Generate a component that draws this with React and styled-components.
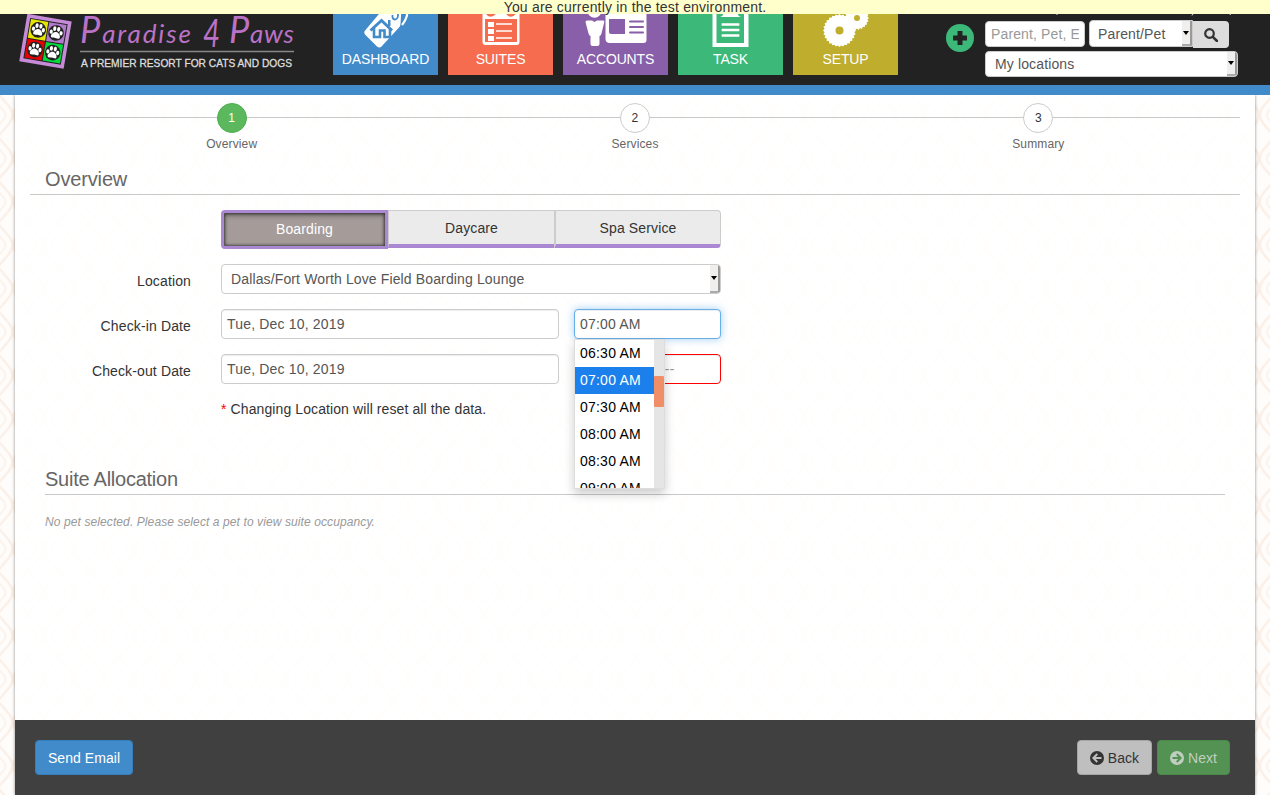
import React from 'react';
import styled, { createGlobalStyle, css } from 'styled-components';

const Global = createGlobalStyle`
  *{box-sizing:border-box}
  html,body{margin:0;background:#fff;overflow:hidden}
  body{font-family:"Liberation Sans",Arial,sans-serif;font-size:14px;line-height:20px;color:#333;letter-spacing:.13px}
  input,button{font:inherit;letter-spacing:inherit}
`;
const Page = styled.div`
  position:relative;width:1270px;height:795px;display:flex;flex-direction:column;overflow:hidden;background:#fffdfb;
`;
const Pattern = styled.svg`position:absolute;inset:0;width:100%;height:100%;`;
const Notice = styled.div`
  height:14px;flex:none;background:#ffffcc;text-align:center;line-height:14px;color:#333;z-index:2;position:relative;letter-spacing:.19px;
`;
const Header = styled.header`
  height:81px;flex:none;background:#222;border-bottom:10px solid #428bca;display:flex;align-items:flex-start;position:relative;z-index:1;
`;
const Logo = styled.svg`width:333px;height:71px;flex:none;display:block;letter-spacing:0;overflow:visible;`;
const Nav = styled.nav`display:flex;gap:10px;`;
const NavTile = styled.a`
  width:105px;height:61px;background:${p => p.$color};color:#fff;display:flex;flex-direction:column;align-items:center;
  svg{display:block;width:60px;height:35px;flex:none;overflow:visible}
`;
const NavLabel = styled.span`line-height:20px;letter-spacing:-.15px;`;
const Tools = styled.div`display:flex;margin-left:48px;`;
const AddButton = styled.button`
  width:28px;height:28px;padding:0;border:0;border-radius:50%;background:#3cb878;margin:10px 11px 0 0;
  svg{display:block}
`;
const ToolStack = styled.div`display:flex;flex-direction:column;width:253px;`;
const AccountEdge = styled.svg`display:block;width:253px;height:6px;flex:none;`;
const ToolRow = styled.div`display:flex;height:28px;margin-bottom:3px;`;
const Search = styled.input`
  width:100px;height:26px;margin:1px 4px 0 0;border:1px solid #ccc;border-radius:4px;padding:0 5px;color:#555;background:#fff;
  &::placeholder{color:#999;opacity:1}
`;
const Select = styled.div`
  display:flex;justify-content:space-between;align-items:stretch;background:#fff;color:#555;border:1px solid #ccc;
  border-radius:${p => p.$joined ? '4px 0 0 4px' : '4px'};width:${p => p.$w}px;height:${p => p.$h}px;
  padding-left:${p => p.$pad || 9}px;line-height:${p => p.$lh || p.$h - 2}px;overflow:hidden;
`;
const Arrow = styled.i`
  width:10px;background:#f0efee;border-right:2px solid #999;border-bottom:2px solid #aaa;display:flex;align-items:center;justify-content:center;
  &::after{content:"";width:0;flex:none;border:3px solid transparent;border-top:4px solid #000;border-bottom:0}
`;
const SearchButton = styled.button`
  width:36px;height:27px;margin-top:1px;border:0;border-radius:0 4px 4px 0;background:#ddd;padding:0;display:flex;align-items:center;justify-content:center;
`;
const Panel = styled.main`
  position:relative;width:1240px;margin:0 15px;flex:1;background:rgba(255,255,255,.9);box-shadow:0 0 3px rgba(0,0,0,.45);
  display:flex;flex-direction:column;min-height:0;
`;
const Steps = styled.ol`
  list-style:none;margin:0 15px;padding:8px 0 0;display:flex;height:67px;
  background:linear-gradient(#c8c8c8,#c8c8c8) 0 22px/100% 1px no-repeat;
`;
const Step = styled.li`flex:1;display:flex;flex-direction:column;align-items:center;font-size:12px;color:#666;`;
const StepDot = styled.span`
  width:30px;height:30px;border-radius:50%;border:1px solid ${p => p.$on ? '#4cae4c' : '#ccc'};
  background:${p => p.$on ? '#5cb85c' : '#fff'};color:${p => p.$on ? '#fff' : '#333'};line-height:28px;text-align:center;margin-bottom:1px;
`;
const Heading = styled.h2`
  margin:${p => p.$inset ? '0 30px' : '0 15px'};padding:${p => p.$inset ? '0' : '0 0 0 15px'};height:33px;line-height:34px;
  font-size:20px;font-weight:400;color:#666;border-bottom:1px solid #c8c8c8;letter-spacing:${p => p.$inset ? '-.25px' : '-.15px'};
`;
const Form = styled.form`display:flex;flex-direction:column;padding:15px 0 0 15px;height:267px;`;
const Row = styled.div`display:flex;height:30px;margin-bottom:15px;`;
const Label = styled.label`width:161px;margin-right:30px;text-align:right;line-height:34px;`;
const Segments = styled.div`display:grid;grid-template-columns:167px 166px 167px;width:500px;height:39px;margin:0 0 15px 191px;align-items:start;`;
const Segment = styled.button`
  height:38px;padding:0;background:#ebebeb;color:#333;border:1px solid #ccc;border-left-width:${p => p.$last ? 2 : 1}px;
  border-right-width:${p => p.$last ? 1 : 0}px;border-bottom:4px solid #aa88d2;border-radius:${p => p.$last ? '0 4px 4px 0' : 0};
  ${p => p.$active && css`height:39px;padding-bottom:2px;background:#a59c9a;color:#fff;border:3px solid #aa88d2;border-radius:4px 0 0 4px;
    box-shadow:inset 0 3px 5px rgba(0,0,0,.3),inset 0 0 3px 1px rgba(0,0,0,.55);`}
`;
const Input = styled.input`
  width:${p => p.$w}px;height:30px;border:1px solid #ccc;border-radius:4px;background:#fff;color:#555;padding:0 5px;outline:0;
  box-shadow:inset 0 1px 1px rgba(0,0,0,.075);letter-spacing:.18px;
  ${p => p.$focus && css`border-color:#66afe9;box-shadow:inset 0 1px 1px rgba(0,0,0,.075),0 0 8px rgba(102,175,233,.6);`}
  ${p => p.$error && css`border-color:#f00;color:#999;`}
`;
const TimeField = styled.div`position:relative;margin-left:15px;`;
const Menu = styled.div`
  position:absolute;left:0;top:30px;width:91px;height:150px;z-index:3;display:flex;background:#fff;border:1px solid #ddd;
  box-shadow:0 5px 10px rgba(0,0,0,.2);overflow:hidden;
`;
const Options = styled.div`width:79px;flex:none;letter-spacing:.22px;`;
const Option = styled.div`
  height:27px;line-height:27px;padding-left:5px;white-space:nowrap;background:${p => p.$on ? '#1b7fec' : '#fff'};color:${p => p.$on ? '#fff' : '#000'};
`;
const Track = styled.div`flex:1;background:#e5e5e5;padding-top:36px;`;
const Thumb = styled.div`height:31px;width:10px;background:#ef8e67;border-radius:1px;`;
const Note = styled.p`margin:0 0 0 191px;line-height:20px;letter-spacing:.1px;b{color:red;font-weight:400}`;
const Empty = styled.p`margin:17px 30px 0;font-size:12px;font-style:italic;color:#999;flex:1;letter-spacing:.1px;`;
const Footer = styled.footer`
  height:75px;flex:none;background:#404040;padding:20px 25px 0 20px;display:flex;gap:5px;align-items:flex-start;
`;
const Button = styled.button`
  height:35px;width:${p => p.$w}px;padding:0;border-radius:4px;border:1px solid ${p => p.$border};background:${p => p.$bg};color:${p => p.$fg};
  display:flex;align-items:center;justify-content:center;gap:4px;letter-spacing:.05px;${p => p.$push && 'margin-left:auto;'}
`;

const Paw = () => (
  <>
    <circle r="7.8" fill="#222" />
    <path d="M0-1c2.4 0 5 3 4.500 5.200C4 6 2 5 0 5s-4 1-4.500-.8C-5 2-2.400-1 0-1z" fill="#fff" />
    <g fill="#fff"><ellipse cx="-5" cy="-.5" rx="1.600" ry="2.200" /><ellipse cx="-2" cy="-4" rx="1.600" ry="2.400" /><ellipse cx="2" cy="-4" rx="1.600" ry="2.400" /><ellipse cx="5" cy="-.5" rx="1.600" ry="2.200" /></g>
  </>
);
const script = { fontFamily: 'Lato, "Liberation Sans", sans-serif', fontStyle: 'italic', fill: '#bb72c6' };
const BrandLogo = () => (
  <Logo viewBox="0 14 333 71">
    <g transform="translate(45.500 41.300) rotate(9.700)">
      <rect x="-22.500" y="-24" width="45" height="48" fill="#c68bd6" />
      <rect x="-19" y="-20.500" width="38" height="41" fill="#222" />
      <rect x="-18" y="-19.500" width="17.500" height="19" fill="#e5e500" /><rect x=".500" y="-19.500" width="17.500" height="19" fill="#b17acb" />
      <rect x="-18" y=".500" width="17.500" height="19" fill="#e80000" /><rect x=".500" y=".500" width="17.500" height="19" fill="#00dc3c" />
      {[[-9, -10], [9, -10], [-9, 10], [9, 10]].map(([x, y]) => <g key={`${x}${y}`} transform={`translate(${x} ${y})`}><Paw /></g>)}
    </g>
    <g {...script}>
      <text x="80" y="43" textLength="111" lengthAdjust="spacing" fontSize="26"><tspan fontSize="36">P</tspan>aradise</text>
      <text x="203" y="47" fontSize="38" textLength="17" lengthAdjust="spacingAndGlyphs">4</text>
      <text x="229" y="43" textLength="65" lengthAdjust="spacing" fontSize="26"><tspan fontSize="36">P</tspan>aws</text>
    </g>
    <path d="M80 51.500H294" stroke="#888" strokeWidth="1.500" />
    <text x="81" y="66.500" fontSize="10.500" fill="#ddd" stroke="#ddd" strokeWidth=".3" textLength="211" lengthAdjust="spacingAndGlyphs">A PREMIER RESORT FOR CATS AND DOGS</text>
  </Logo>
);
const gear = (cx, cy, r, n) => {
  const pts = [];
  for (let i = 0; i < n * 2; i++) {
    const a = (i * Math.PI) / n;
    const q = i % 2 ? r - 1.5 : r;
    pts.push(`${(cx + q * Math.cos(a)).toFixed(2)},${(cy + q * Math.sin(a)).toFixed(2)}`);
  }
  return pts.join(' ');
};
const icons = {
  DASHBOARD: (c) => <svg viewBox="0 14 60 35">
    <path d="M51.500 12q-.5 7-5.500 13" stroke="#fff" strokeWidth="2.200" fill="none" />
    <path d="M28 8H45.500L44.500 24Q44.500 26 43 27.500L25.500 46.500Q23.500 48.500 21 46.500L9.500 35Q7 32.500 9.500 30z" fill="#fff" />
    <path d="M42 12v3.500q-.5 4-3.200 4q-2.800-.5-2.300-4.500" stroke={c} strokeWidth="1.800" fill="none" />
    <path d="M14.500 30.500L25.500 20.500L36 30.500" fill="none" stroke={c} strokeWidth="3" />
    <path d="M18 28v9h6v-6.500h4.500V37H34v-9" fill="none" stroke={c} strokeWidth="2.600" />
    <path d="M32 20h2.500v6h-2.500z" fill={c} />
  </svg>,
  SUITES: (c) => <svg viewBox="0 14 60 35">
    <path d="M11.500 8h37v34a3 3 0 0 1-3 3h-31a3 3 0 0 1-3-3z" fill="#fff" />
    <path d="M16 13q3 5 8 0M36 13q4 5 8 0" stroke={c} strokeWidth="2.500" fill="none" />
    <path d="M14 19h32v23H14z" fill={c} />
    <path d="M17 22h6v5h-6zM17 29h6v5h-6zM17 36h6v5h-6z" fill="#fff" />
    <path d="M25 24h16M25 31h16M25 38h16" stroke="#fff" strokeWidth="1.400" />
  </svg>,
  ACCOUNTS: (c) => <svg viewBox="0 14 60 35">
    <circle cx="8.500" cy="11" r="6.800" fill="#fff" />
    <path d="M1 20.500H6L8.500 22L11 20.500H17.500q1 0 .8 1.500L15.500 33.500q-.5 2-2 2.500V44q0 2-2 2H6.500q-2 0-2-2V36q-1.500-.5-2-2.500L-.5 22q0-1.500 1.500-1.500z" fill="#fff" />
    <path d="M19.500 10h41v30a3 3 0 0 1-3 3h-34.500a4 4 0 0 1-3.500-4z" fill="#fff" />
    <path d="M23 19h16v15H25q-2 0-2-2z" fill={c} /><path d="M44 21.500h13M44 27h13M44 32.500h13" stroke={c} strokeWidth="2" strokeLinecap="round" />
  </svg>,
  TASK: (c) => <svg viewBox="0 14 60 35">
    <path d="M11.500 10h36v37h-36z" fill="#fff" /><path d="M15.500 14h27.500v29h-27.500z" fill={c} /><path d="M19 17q3-1 4-4h13q1 3 4 4z" fill="#fff" />
    <path d="M22 24.500h15M22 30h15M22 35.500h15" stroke="#fff" strokeWidth="2.700" strokeLinecap="square" />
  </svg>,
  SETUP: (c) => <svg viewBox="0 14 60 35">
    <polygon points={gear(23.5, 30.500, 16.500, 28)} fill="#fff" /><polygon points={gear(41, 18, 12, 22)} fill="#fff" />
    <circle cx="23.500" cy="30.500" r="4" fill={c} /><circle cx="41" cy="18" r="3" fill={c} />
  </svg>,
};
const nav = [['DASHBOARD', '#428bca'], ['SUITES', '#f56c4e'], ['ACCOUNTS', '#885fa8'], ['TASK', '#3cb878'], ['SETUP', '#bfae2e']];
const times = ['06:30 AM', '07:00 AM', '07:30 AM', '08:00 AM', '08:30 AM', '09:00 AM'];

const CircleArrow = ({ color, cut, flip }) => (
  <svg width="14" height="14" viewBox="0 0 14 14">
    <g transform={flip ? 'translate(14 0) scale(-1 1)' : undefined}>
      <circle cx="7" cy="7" r="7" fill={color} /><path d="M7.300 3L3.300 7l4 4M3.500 7H11.500" fill="none" stroke={cut} strokeWidth="1.900" />
    </g>
  </svg>
);

export default function App() {
  return (
    <>
      <Global />
      <Page>
        <Pattern>
          <defs>
            <pattern id="lattice" width="30.4" height="43.4" x="13" y="93.300" patternUnits="userSpaceOnUse">
              <path d="M15.200 0L4 13Q.8 17 .5 21.700Q.8 26 4 30.400L15.200 43.400M15.200 0L26.400 13Q29.600 17 29.900 21.700Q29.600 26 26.400 30.400L15.200 43.400" fill="none" stroke="#fbf0e8" strokeWidth="2.600" />
              <path d="M15.200 10.500L8.500 18.500Q6.500 21.700 8.500 25L15.200 33L21.900 25Q23.900 21.700 21.900 18.500z" fill="none" stroke="#fcf3ec" strokeWidth="2.200" />
            </pattern>
          </defs>
          <rect width="1270" height="795" fill="url(#lattice)" />
        </Pattern>
        <Notice>You are currently in the test environment.</Notice>
        <Header>
          <BrandLogo />
          <Nav>{nav.map(([name, color]) => <NavTile key={name} $color={color}>{icons[name](color)}<NavLabel>{name}</NavLabel></NavTile>)}</Nav>
          <Tools>
            <AddButton aria-label="Add"><svg width="28" height="28"><path d="M14 7v14M7 14h14" stroke="#222" strokeWidth="5" /></svg></AddButton>
            <ToolStack>
              <AccountEdge><path d="M71.500 0l1 1M208 0l-1 1.500M245.500 0l-.5 1" stroke="#ddd" fill="none" /></AccountEdge>
              <ToolRow>
                <Search placeholder="Parent, Pet, Email" />
                <Select $w={104} $h={27} $lh={27} $pad={8} $joined>Parent/Pet<Arrow /></Select>
                <SearchButton aria-label="Search"><svg width="14" height="14" viewBox="0 0 14 14"><circle cx="5.500" cy="5.500" r="4.300" fill="none" stroke="#333" strokeWidth="2.200" /><path d="M8.800 8.800L13 13" stroke="#333" strokeWidth="2.600" strokeLinecap="round" /></svg></SearchButton>
              </ToolRow>
              <Select $w={253} $h={26}>My locations<Arrow /></Select>
            </ToolStack>
          </Tools>
        </Header>
        <Panel>
          <Steps>{['Overview', 'Services', 'Summary'].map((s, i) => <Step key={s}><StepDot $on={i === 0}>{i + 1}</StepDot>{s}</Step>)}</Steps>
          <Heading>Overview</Heading>
          <Form>
            <Segments><Segment type="button" $active>Boarding</Segment><Segment type="button">Daycare</Segment><Segment type="button" $last>Spa Service</Segment></Segments>
            <Row><Label>Location</Label><Select $w={500} $h={30}>Dallas/Fort Worth Love Field Boarding Lounge<Arrow /></Select></Row>
            <Row>
              <Label>Check-in Date</Label><Input $w={338} defaultValue="Tue, Dec 10, 2019" />
              <TimeField>
                <Input $w={147} $focus defaultValue="07:00 AM" />
                <Menu><Options>{times.map(t => <Option key={t} $on={t === '07:00 AM'}>{t}</Option>)}</Options><Track><Thumb /></Track></Menu>
              </TimeField>
            </Row>
            <Row><Label>Check-out Date</Label><Input $w={338} defaultValue="Tue, Dec 10, 2019" /><TimeField><Input $w={147} $error defaultValue="--Select Time--" /></TimeField></Row>
            <Note><b>*</b> Changing Location will reset all the data.</Note>
          </Form>
          <Heading $inset>Suite Allocation</Heading>
          <Empty>No pet selected. Please select a pet to view suite occupancy.</Empty>
          <Footer>
            <Button $w={98} $bg="#428bca" $border="#357ebd" $fg="#fff">Send Email</Button>
            <Button $w={75} $push $bg="#bfbfbf" $border="#a5a5a5" $fg="#333"><CircleArrow color="#333" cut="#bfbfbf" />Back</Button>
            <Button $w={73} $bg="#539253" $border="#4a8b4a" $fg="#bfcfbf"><CircleArrow color="#bfcfbf" cut="#539253" flip />Next</Button>
          </Footer>
        </Panel>
      </Page>
    </>
  );
}
